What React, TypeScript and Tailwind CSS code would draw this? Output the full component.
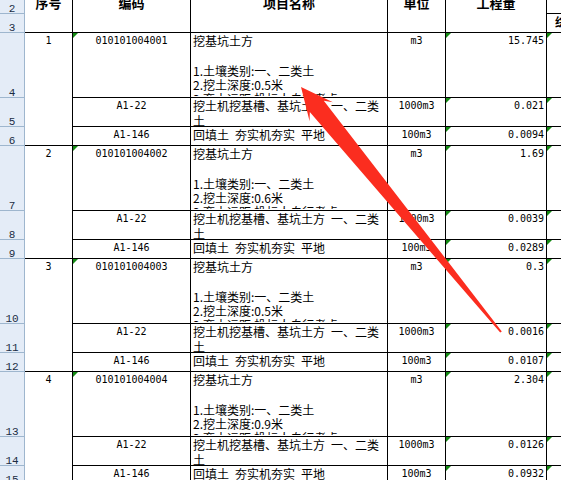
import React from "react";

const MONO = "[font-family:'DejaVu_Sans_Mono',monospace] text-[10px] leading-[14.5px]";
const CJK = "[font-family:'Noto_Sans_CJK_SC',sans-serif] text-[12px]";

function Tri() {
  return (
    <span className="absolute left-0 top-0 w-[5px] h-[5px] bg-[#138a13] [clip-path:polygon(0_0,100%_0,0_100%)]" />
  );
}

function RowNum({ n, h }: { n: string; h: string }) {
  return (
    <div
      className={`${h} shrink-0 border-b border-[#9eb6ce] bg-[#e4ecf7] flex items-end justify-center [font-family:'Liberation_Mono',monospace] text-[11px] leading-[8px] text-[#1b2c44]`}
    >
      {n}
    </div>
  );
}

function HeadCell({ w, text }: { w: string; text: string }) {
  return (
    <div className={`${w} shrink-0 h-[33px] border-r border-b border-black flex justify-center items-start overflow-hidden`}>
      <span className={`${CJK} text-[13px] font-bold leading-[14px] -mt-[4px]`}>{text}</span>
    </div>
  );
}

type RowProps = {
  h: string;
  code: string;
  codeTri?: boolean;
  name: React.ReactNode;
  unit: string;
  qty: string;
};

function Row({ h, code, codeTri, name, unit, qty }: RowProps) {
  return (
    <div className={`${h} shrink-0 flex border-b border-black`}>
      <div className={`relative w-[118px] shrink-0 border-r border-black text-center pt-px ${MONO}`}>
        {codeTri && <Tri />}
        {code}
      </div>
      <div className={`w-[197px] shrink-0 border-r border-black overflow-hidden pl-[2px] pr-[2px] pt-px ${CJK}`}>
        {name}
      </div>
      <div className={`w-[58px] shrink-0 border-r border-black text-center pt-px ${MONO}`}>{unit}</div>
      <div className={`relative w-[101px] shrink-0 border-r border-black text-right pr-[2px] pt-px ${MONO}`}>
        <Tri />
        {qty}
      </div>
      <div className="relative flex-1">
        <Tri />
      </div>
    </div>
  );
}

type G = {
  rows: [string, string, string];
  seq: string;
  code: string;
  depth: string;
  q: [string, string, string];
};

const groups: G[] = [
  { rows: ["4", "5", "6"], seq: "1", code: "010101004001", depth: "0.5", q: ["15.745", "0.021", "0.0094"] },
  { rows: ["7", "8", "9"], seq: "2", code: "010101004002", depth: "0.6", q: ["1.69", "0.0039", "0.0289"] },
  { rows: ["10", "11", "12"], seq: "3", code: "010101004003", depth: "0.5", q: ["0.3", "0.0016", "0.0107"] },
  { rows: ["13", "14", "15"], seq: "4", code: "010101004004", depth: "0.9", q: ["2.304", "0.0126", "0.0932"] },
];

function BigName({ depth }: { depth: string }) {
  return (
    <div>
      <div className="h-[15px] leading-[14.5px] whitespace-nowrap">挖基坑土方</div>
      <div className="h-[15px]" />
      <div className="h-[14px] leading-[14.5px] whitespace-nowrap">1.土壤类别:一、二类土</div>
      <div className="h-[14px] leading-[14.5px] whitespace-nowrap">2.挖土深度:{depth}米</div>
      <div className="h-[4px] overflow-hidden leading-[14.5px] whitespace-nowrap">3.弃土运距:投标人自行考虑</div>
    </div>
  );
}

function Group({ g }: { g: G }) {
  return (
    <div className="flex h-[113px] shrink-0">
      <div className="w-[25px] shrink-0 flex flex-col border-r border-[#9eb6ce]">
        <RowNum n={g.rows[0]} h="h-[65px]" />
        <RowNum n={g.rows[1]} h="h-[29px]" />
        <RowNum n={g.rows[2]} h="h-[19px]" />
      </div>
      <div className={`w-[48px] shrink-0 border-r border-b border-black text-center pt-px ${MONO}`}>{g.seq}</div>
      <div className="flex-1 flex flex-col min-w-0">
        <Row h="h-[65px]" code={g.code} codeTri name={<BigName depth={g.depth} />} unit="m3" qty={g.q[0]} />
        <Row
          h="h-[29px]"
          code="A1-22"
          name={
            <div className="h-[27px] overflow-hidden leading-[14.5px]">{"挖土机挖基槽、基坑土方\u2002一、二类土"}</div>
          }
          unit="1000m3"
          qty={g.q[1]}
        />
        <Row
          h="h-[19px]"
          code="A1-146"
          name={<div className="leading-[14.5px] whitespace-nowrap">{"回填土\u2002夯实机夯实\u2002平地"}</div>}
          unit="100m3"
          qty={g.q[2]}
        />
      </div>
    </div>
  );
}

export default function App() {
  return (
    <div className="relative w-[561px] h-[480px] overflow-hidden bg-white text-black flex flex-col">
      <div className="flex h-[33px] shrink-0">
        <div className="w-[25px] shrink-0 flex flex-col border-r border-[#9eb6ce]">
          <RowNum n="2" h="h-[14px]" />
          <RowNum n="3" h="h-[19px]" />
        </div>
        <HeadCell w="w-[48px]" text="序号" />
        <HeadCell w="w-[118px]" text="编码" />
        <HeadCell w="w-[197px]" text="项目名称" />
        <HeadCell w="w-[58px]" text="单位" />
        <HeadCell w="w-[101px]" text="工程量" />
        <div className="flex-1 flex flex-col border-b border-black">
          <div className="h-[14px] shrink-0 border-b border-black" />
          <div className={`flex-1 pl-[8px] pt-px whitespace-nowrap overflow-hidden font-bold leading-[14.5px] ${CJK}`}>
            综合单价
          </div>
        </div>
      </div>
      {groups.map((g) => (
        <Group key={g.seq} g={g} />
      ))}
      <svg
        className="absolute left-0 top-0 pointer-events-none"
        width="561"
        height="480"
        viewBox="0 0 561 480"
      >
        <polygon
          fill="#fb2d1f"
          points="301,87 332.9,102.3 323.8,100.7 501.8,331.4 500.2,332.6 309.8,112.1 309.6,121.3"
        />
      </svg>
    </div>
  );
}
